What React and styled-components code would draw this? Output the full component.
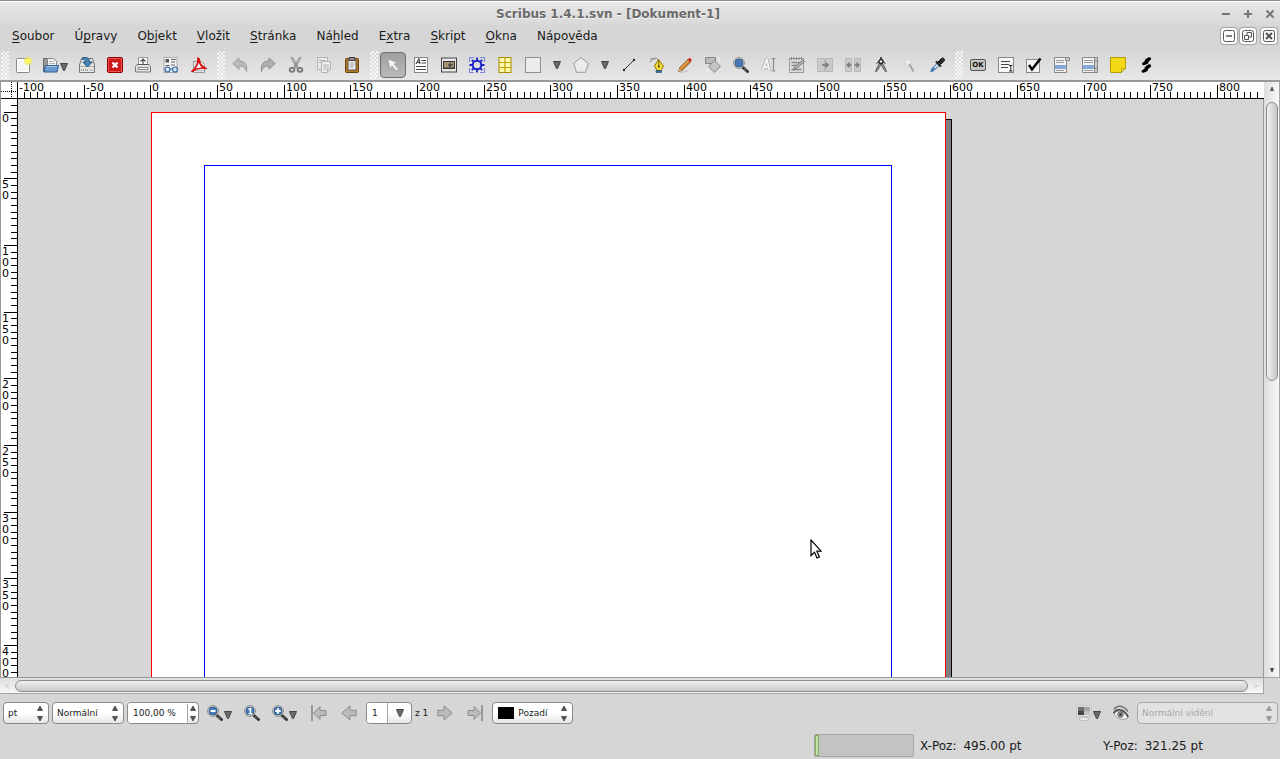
import React from "react";
import styled, { createGlobalStyle, css } from "styled-components";

const SCALE = 4 / 3;

const menus = [
  ["", "S", "oubor"],
  ["Ú", "p", "ravy"],
  ["O", "b", "jekt"],
  ["", "V", "ložit"],
  ["", "S", "tránka"],
  ["Ná", "h", "led"],
  ["E", "x", "tra"],
  ["", "S", "kript"],
  ["", "O", "kna"],
  ["Nápo", "v", "ěda"],
];

const magnifier = (
  <>
    <path d="M10 10.500l4.500 4" stroke="#333" strokeWidth="3" strokeLinecap="round" />
    <path d="M11 11.500l3 2.600" stroke="#aaa" strokeWidth="1" strokeDasharray="1 1" />
    <circle cx="6" cy="6" r="5.400" fill="#e4e4e0" stroke="#8a8c86" />
    <circle cx="6" cy="6" r="4" fill="#4a7ab5" stroke="#2f5c94" />
  </>
);

const icons = {
  new: (
    <>
      <rect x="0.500" y="1.500" width="13" height="14" rx="1" fill="#f4f4f2" stroke="#888" />
      <rect x="1.500" y="2.500" width="11" height="12" fill="none" stroke="#fff" />
      <circle cx="12" cy="4" r="4" fill="#f5ef55" opacity="0.7" />
      <circle cx="12" cy="4" r="2.300" fill="#fffa5c" />
    </>
  ),
  open: (
    <>
      <path d="M0.500 14.500v-13h5l1 2h6v11z" fill="#999b96" stroke="#666" />
      <path d="M4.500 10V1.500h6l3 2.500v6z" fill="#f1f1f0" stroke="#888" />
      <path d="M6 4.500h5M6 6.500h6" stroke="#b5b5b5" />
      <path d="M2.500 8.500h13l-1.500 6.500H0.800z" fill="#6a9bd0" stroke="#2c5a92" />
      <path d="M3.300 9.500h11" stroke="#a7c6e8" />
    </>
  ),
  save: (
    <>
      <path d="M0.500 15.500V8l2-6.500h11l2 6.500v7.500z" fill="#e6e6e4" stroke="#777" />
      <path d="M1 9.500h14" stroke="#aaa" />
      <path d="M2.500 12v2M4.500 12v2M6.500 12v2M8.500 12v2" stroke="#999" />
      <path d="M11 13h3" stroke="#aaa" />
      <path d="M3 1c5-1.500 7.500 0 7.500 4h2.800L8.500 10 3.800 5h2.800c0-2-1.500-3-3.600-2.700z" fill="#4686b4" stroke="#1d527b" />
    </>
  ),
  close: (
    <>
      <rect x="0.500" y="0.500" width="15" height="15" rx="1.500" fill="#cc1919" stroke="#8e0000" />
      <rect x="1.500" y="1.500" width="13" height="13" rx="0.500" fill="none" stroke="#e55" />
      <path d="M5.500 5.500l5 5M10.500 5.500l-5 5" stroke="#fff" strokeWidth="2.300" />
    </>
  ),
  print: (
    <>
      <rect x="3.500" y="0.500" width="9" height="9" fill="#fafafa" stroke="#999" />
      <path d="M8 2v5M5.500 4.500L8 2l2.500 2.500" stroke="#555" fill="none" strokeWidth="1.200" />
      <path d="M0.500 9.500l1.500-2h12l1.500 2v5.500h-15z" fill="#e3e3e1" stroke="#777" />
      <path d="M3 10.500h10v2H3z" fill="#fff" stroke="#888" />
      <path d="M3 7.500h10" stroke="#555" />
    </>
  ),
  preflight: (
    <>
      <rect x="1" y="0.500" width="13" height="15" fill="#f2f2f0" stroke="#aaa" />
      <path d="M2.500 2h3.500v3.500H2.500z" fill="#555" />
      <path d="M8 2.500h5M8 5h4M2.500 8.500h4M8 8h4" stroke="#666" />
      <circle cx="4.500" cy="12.500" r="2.500" fill="#d7e6f5" stroke="#3465a4" strokeWidth="1.200" />
      <circle cx="12" cy="12.500" r="2.500" fill="#d7e6f5" stroke="#3465a4" strokeWidth="1.200" />
      <path d="M6.500 12h3" stroke="#3465a4" />
    </>
  ),
  pdf: (
    <>
      <path d="M2.500 4.500h8l3 3v8h-11z" fill="#e2e2e2" stroke="#999" />
      <path d="M4 13.500h8" stroke="#bbb" />
      <path d="M1 14.500C5 11 7.500 6 7 1c1 5 3 9 8 10.500-5-1.300-9-.5-14 3z" fill="#fff" stroke="#d40f0f" strokeWidth="1.700" strokeLinejoin="round" />
      <path d="M7.500 1.500l1 4" stroke="#d40f0f" strokeWidth="2.500" />
    </>
  ),
  undo: <path d="M0.800 6.500L7 1v3c5 0 8.500 2.500 7.500 10.500-1-4-3-5.500-7.500-5.500v3.200z" fill="#bcbcbc" stroke="#999" />,
  redo: <path d="M15.200 6.500L9 1v3C4 4 0.500 6.500 1.500 14.500c1-4 3-5.500 7.500-5.500v3.200z" fill="#b0b0b0" stroke="#8c8c8c" />,
  cut: (
    <>
      <path d="M3 0.500h1.500l6 10-1.500 1zM13 0.500h-1.500l-6 10 1.500 1z" fill="#ccc" stroke="#8c8c8c" />
      <ellipse cx="4" cy="12.800" rx="2.400" ry="2" fill="none" stroke="#777" strokeWidth="1.800" />
      <ellipse cx="12" cy="12.800" rx="2.400" ry="2" fill="none" stroke="#777" strokeWidth="1.800" />
    </>
  ),
  copy: (
    <g stroke="#b4b4b4" fill="#e9e9e9">
      <path d="M1.500 0.500h10v12h-10z" />
      <path d="M3 3.500h6M3 5.500h6" />
      <path d="M5.500 4.500h9v8l-3 3h-6z" fill="#eee" />
      <path d="M7 8h6M7 10h6M7 12h4M11.500 15v-3h3" />
    </g>
  ),
  paste: (
    <>
      <rect x="1.500" y="1.500" width="13" height="14" rx="1" fill="#b5742a" stroke="#6e4108" />
      <path d="M4 3.500h8v9.500H4z" fill="#f3f3f1" stroke="#555" />
      <path d="M5 0.500h6v3H5z" fill="#888" stroke="#444" />
      <path d="M5.500 6h5M5.500 8h5M5.500 10h4" stroke="#999" />
    </>
  ),
  select: <path d="M3 2l9 3.500-3 1.700 4.500 4.800-2.300 2L7 9l-2 3z" fill="#f4f4f4" stroke="#999" strokeWidth="0.600" />,
  text: (
    <>
      <rect x="1.500" y="0.500" width="13" height="15" fill="#fdfdfd" stroke="#888" />
      <path d="M3 7l3-5 1 5M4 5.500h3" stroke="#444" fill="none" strokeWidth="1.200" />
      <path d="M8.500 3.500H13M8.500 6H13M3 9.500h10M3 12.500h10" stroke="#444" />
    </>
  ),
  image: (
    <>
      <rect x="0.500" y="1" width="15" height="14" fill="#e7e7e5" stroke="#444" />
      <rect x="2.500" y="4.500" width="11" height="7" fill="#a59474" stroke="#333" />
      <path d="M3 10.500h10v1H3z" fill="#4c4330" />
      <path d="M9 5.500V11M7 8h5" stroke="#333" />
    </>
  ),
  render: (
    <>
      <path d="M0.500 5V0.500H5M11 0.500h4.500V5M15.500 11v4.500H11M5 15.500H0.500V11" fill="none" stroke="#7c88e0" strokeWidth="1.200" />
      <g stroke="#1c22c8" fill="none">
        <circle cx="8" cy="8" r="4.300" strokeWidth="2" />
        <path d="M8 0.500v3M8 12.500v3M0.500 8h3M12.500 8h3M2.800 2.800l2 2M11.200 11.200l2 2M13.200 2.800l-2 2M4.800 11.200l-2 2" strokeWidth="1.800" />
      </g>
    </>
  ),
  table: (
    <>
      <rect x="2" y="0.500" width="12" height="15" fill="#fff8b0" stroke="#a88c00" />
      <path d="M8 1v14M2 5.500h12M2 10.500h12" stroke="#c2a200" strokeWidth="1.200" />
    </>
  ),
  shape: <rect x="0.500" y="0.500" width="15" height="15" fill="#ececec" stroke="#8e8e8e" />,
  polygon: <path d="M8 0.700l7.300 5.600-2.800 9h-9L0.700 6.300z" fill="#ececec" stroke="#999" />,
  line: (
    <>
      <path d="M3 13L13 3" stroke="#333" />
      <circle cx="3" cy="13" r="1.200" fill="#222" />
      <circle cx="13" cy="3" r="1.200" fill="#222" />
    </>
  ),
  bezier: (
    <>
      <path d="M1 5C4-0.500 9 0.500 10 4M1 2h5" fill="none" stroke="#888" />
      <path d="M9.500 2.500L5.500 9l2.500 4.500h4L14.500 9z" fill="#f1da3c" stroke="#8f7600" />
      <path d="M9.800 3v6" stroke="#6f5a00" />
      <circle cx="9.800" cy="9.500" r="1" fill="#4c3e00" />
      <path d="M7 13.500h5.500v2H7z" fill="#3b6ea5" stroke="#234a75" strokeWidth="0.600" />
    </>
  ),
  pencil: (
    <>
      <path d="M3 14.700c4 1 6 0 8-1" stroke="#c4c4c4" strokeWidth="1.500" fill="none" />
      <path d="M1.500 14.500l1.500-4L11 2.500l2.500 2.500-8 8z" fill="#d98a32" stroke="#834a0c" />
      <path d="M11 2.500l1-1c1-.8 3 1 2.200 2.200l-.9 1.100z" fill="#db2525" stroke="#b33" strokeWidth="0.500" />
      <path d="M1.500 14.500l1-2.700 1.800 1.500z" fill="#f0d8a8" />
      <path d="M4 11l7-7" stroke="#f3b873" />
    </>
  ),
  rotate: (
    <>
      <path d="M0.500 0.500h10v6h-10z" fill="#bbb" stroke="#888" />
      <path d="M9.500 3.500l6 6-6 6-6-6z" fill="#c4c4c4" stroke="#888" />
      <path d="M12 1c2 0 3 1.500 3 3M1.500 11c0 2.500 1 4 3.500 4" fill="none" stroke="#eee" strokeWidth="1.500" />
    </>
  ),
  zoom: magnifier,
  textEdit: (
    <>
      <path d="M1.500 13.500L5.800 2.500l2.700 11M3 10h5" fill="none" stroke="#aaa" strokeWidth="3.400" />
      <path d="M1.500 13.500L5.800 2.500l2.700 11M3 10h5" fill="none" stroke="#f4f4f4" strokeWidth="2" />
      <path d="M10.500 1.500h4M12.500 1.500v12.500M10.500 14h4" stroke="#8e8e8e" strokeWidth="1.200" />
    </>
  ),
  story: (
    <>
      <rect x="0.500" y="1.500" width="14" height="14" fill="#ddd" stroke="#999" />
      <path d="M2.500 0v3M5 0v3M7.500 0v3M10 0v3M12.500 0v3" stroke="#888" />
      <path d="M2.500 5.500h8M2.500 8.500h6M2.500 12.500h10" stroke="#888" strokeWidth="1.400" />
      <path d="M4 13l2-3.500L14 3l1.500 1.500-8 7z" fill="#b5b5b5" stroke="#777" />
    </>
  ),
  link: (
    <>
      <path d="M0.500 1.500h7v13h-7zM8.500 1.500h7v13h-7z" fill="#cacaca" stroke="#b8b8b8" />
      <path d="M5 8h5M8.500 5.500L11 8l-2.500 2.500" fill="none" stroke="#777" strokeWidth="1.500" />
    </>
  ),
  unlink: (
    <>
      <path d="M0.500 1.500h6v13h-6zM9.500 1.500h6v13h-6z" fill="#cacaca" stroke="#b8b8b8" />
      <path d="M2.500 8h4M9.500 8h4M4.500 5.800L2.300 8l2.200 2.200M11.500 5.800L13.700 8l-2.200 2.200" fill="none" stroke="#777" strokeWidth="1.500" />
    </>
  ),
  measure: (
    <>
      <path d="M8 0v3" stroke="#222" strokeWidth="1.500" />
      <path d="M7 5l-3.500 7-.8 3 2-2L9 5.500zM9 5l3.500 7 .8 3-2-2L7 5.500z" fill="#aaa" stroke="#555" />
      <circle cx="8" cy="4.500" r="2" fill="#eee" stroke="#222" strokeWidth="1.300" />
      <path d="M3.500 6.500L6 4.500M12.500 6.500L10 4.500" stroke="#222" />
    </>
  ),
  copyProps: (
    <>
      <path d="M8 6.500l4.500 8" stroke="#a5a5a5" strokeWidth="2" />
      <path d="M6.500 1l.8 2.800L10.500 2 8.800 5l2 2-3-.2L6.500 10l-1-3.500L2 6l3-1.500z" fill="#f2f2f2" stroke="#ccc" strokeWidth="0.600" />
    </>
  ),
  picker: (
    <>
      <path d="M2 14.500l1-3L8.500 6 10.500 8 5 13.500z" fill="#dbe7f5" stroke="#3465a4" />
      <path d="M1.200 15l3-1.500 2.500-2.500-2.500-.5-1.500 2z" fill="#3c78c0" />
      <path d="M7 4.500l5 5M9 6l3.500-3.500" stroke="#222" strokeWidth="2.200" />
      <path d="M10 5.500l2.500-4c1.300-1.600 4.300 1 2.500 2.700L12 7z" fill="#2b2f36" stroke="#111" />
    </>
  ),
  pdfText: (
    <>
      <rect x="0.500" y="0.500" width="15" height="15" fill="#f7f7f5" stroke="#888" />
      <path d="M3 4.500h9M3 7.500h8M3 10.500h7" stroke="#444" />
      <path d="M11 8.500h3.500M12.800 8.500v5.500M11 14h3.500" stroke="#222" />
    </>
  ),
  check: (
    <>
      <rect x="0.500" y="2.500" width="13" height="13" fill="#f2f2f0" stroke="#888" />
      <path d="M3 8l3 4.500L14.500 1.500" fill="none" stroke="#000" strokeWidth="2.400" />
    </>
  ),
  combo: (
    <>
      <path d="M0.500 0.500h12v15h-12z" fill="#f3f3f1" stroke="#888" />
      <path d="M11.500 0.500h4v3h-4z" fill="#ccc" stroke="#888" />
      <path d="M2 3.500h8M2 5.500h8M2 13.500h8" stroke="#999" />
      <path d="M1 8h11v4H1z" fill="#86a8d6" />
    </>
  ),
  list: (
    <>
      <path d="M0.500 0.500h15v15h-15z" fill="#f3f3f1" stroke="#888" />
      <path d="M12.500 0.500h3v15h-3zM12.500 4h3M12.500 11.500h3" fill="#ccc" stroke="#888" />
      <path d="M2 3.500h9M2 5.500h9M2 13.500h9" stroke="#999" />
      <path d="M1 8h11v4H1z" fill="#86a8d6" />
    </>
  ),
  note: (
    <>
      <path d="M0.500 0.500h15v11l-4 4h-11z" fill="#f3da18" stroke="#b89c00" />
      <path d="M11.500 15.500v-4h4z" fill="#fff07a" stroke="#b89c00" />
    </>
  ),
  annotation: (
    <g fill="#000">
      <ellipse cx="9.800" cy="2.800" rx="3.600" ry="1.900" transform="rotate(-32 9.800 2.800)" />
      <ellipse cx="7.300" cy="6" rx="3.400" ry="1.700" transform="rotate(-22 7.300 6)" />
      <ellipse cx="9.800" cy="10" rx="3.600" ry="1.900" transform="rotate(-32 9.800 10)" />
      <ellipse cx="6.800" cy="13.500" rx="3.400" ry="1.700" transform="rotate(-22 6.800 13.500)" />
    </g>
  ),
  zoomOut: (
    <>
      {magnifier}
      <path d="M3.500 6h5" stroke="#fff" strokeWidth="2" />
    </>
  ),
  zoomOne: (
    <>
      {magnifier}
      <path d="M4.500 4.500L6.500 3.500v5M4.500 8.700h4" fill="none" stroke="#fff" strokeWidth="1.500" />
    </>
  ),
  zoomIn: (
    <>
      {magnifier}
      <path d="M3.300 6h5.400M6 3.300v5.400" stroke="#fff" strokeWidth="2" />
    </>
  ),
  first: (
    <>
      <path d="M1 0v16" stroke="#888" strokeWidth="1.600" />
      <path d="M2.500 8L9 1.500v4h6v5H9v4z" fill="#bbb" stroke="#8c8c8c" />
    </>
  ),
  prev: <path d="M0.800 8L9 0.800v4.500h6.200v5.400H9v4.500z" fill="#bbb" stroke="#8c8c8c" />,
  next: <path d="M15.200 8L7 0.800v4.500H0.800v5.400H7v4.500z" fill="#bbb" stroke="#8c8c8c" />,
  last: (
    <>
      <path d="M15 0v16" stroke="#888" strokeWidth="1.600" />
      <path d="M13.500 8L7 1.500v4H1v5h6v4z" fill="#bbb" stroke="#8c8c8c" />
    </>
  ),
  preview: (
    <>
      <rect x="0.500" y="0.500" width="15" height="11" fill="#ddd" stroke="#c8c8c8" />
      <path d="M2 2h6v4H2z" fill="#6d6d6d" />
      <path d="M8 2h6v4H8z" fill="#a5a5a5" />
      <path d="M2 6h6v4H2z" fill="#444" />
      <path d="M8 6h6v4H8z" fill="#c4c4c4" />
      <ellipse cx="8" cy="14" rx="5" ry="1.500" fill="#f3f3f3" stroke="#bbb" />
    </>
  ),
  eye: (
    <>
      <path d="M1 4.500C4-0.500 10 0 15 6.500" fill="none" stroke="#777" strokeWidth="1.500" />
      <path d="M1 9C4 5 11 4 15 13 10 15.500 4 14 1 9z" fill="#f4f4f4" stroke="#888" strokeWidth="0.800" />
      <path d="M0.500 8C4 3 11 3.500 15.300 12" fill="none" stroke="#444" strokeWidth="1.500" />
      <circle cx="7.500" cy="9.500" r="2.700" fill="#aaa" stroke="#555" />
      <circle cx="7.500" cy="9.500" r="1.200" fill="#222" />
    </>
  ),
};

const Icon = ({ name }) => (
  <Glyph viewBox="0 0 16 16" fill="none" aria-hidden="true">
    {icons[name]}
  </Glyph>
);

const DownArrow = ({ low }) => (
  <ArrowGlyph viewBox="0 0 8 8" aria-hidden="true" $low={low}>
    <path d="M0.500 0.500h7L4.500 7.500h-1z" fill="#6a6a6a" stroke="#444" />
  </ArrowGlyph>
);

const Steppers = () => (
  <StepGlyph viewBox="0 0 6 18" aria-hidden="true">
    <path d="M3 2l2.500 4.500h-5zM3 17l2.500-4.500h-5z" fill="#555" stroke="#444" strokeWidth="0.800" />
  </StepGlyph>
);

const Tool = ({ name, label, menu, wide, active }) => (
  <ToolButton type="button" aria-label={label} $menu={menu} $wide={wide} $active={active}>
    <Icon name={name} />
    {(menu || wide) && <DownArrow low={menu} />}
  </ToolButton>
);

const Choice = ({ label, value, width, swatch, disabled }) => (
  <Field $width={width} $disabled={disabled}>
    {swatch && <Swatch />}
    <Select aria-label={label} defaultValue={value} disabled={disabled}>
      <option>{value}</option>
    </Select>
    <Steppers />
  </Field>
);

// tick positions for every 5 pt between the two pixel bounds
const ticks = (origin, from, to) => {
  const list = [];
  const start = Math.floor((from - origin) / SCALE / 5) * 5;
  for (let v = start; ; v += 5) {
    const pos = Math.floor(origin + v * SCALE);
    if (pos >= to) break;
    list.push({ v, pos, major: v % 50 === 0 });
  }
  return list;
};

const HorizontalRuler = () => (
  <HRuler aria-label="Vodorovné pravítko">
    {ticks(132.67, -1, window.innerWidth - 34).map(({ v, pos, major }) => (
      <g key={v}>
        <rect x={pos} y={major ? 3 : 10} width="1" height={major ? 13 : 6} />
        {major && <text x={pos + 2} y="9">{v}</text>}
      </g>
    ))}
  </HRuler>
);

const VerticalRuler = () => (
  <VRuler aria-label="Svislé pravítko">
    {ticks(13, -8, window.innerHeight - 181).map(({ v, pos, major }) => (
      <g key={v}>
        <rect x={major ? 3 : 10} y={pos} width={major ? 13 : 6} height="1" />
        {major &&
          String(v).split("").map((digit, i) => (
            <text key={i} x="1" y={pos + 10 + i * 11}>{digit}</text>
          ))}
      </g>
    ))}
  </VRuler>
);

const App = () => {
  return (
    <>
      <GlobalStyle />
      <Window>
        <TitleBar>
          <Title>Scribus 1.4.1.svn - [Dokument-1]</Title>
          <WindowButtons>
            <WindowButton type="button" aria-label="Minimalizovat">
              <svg width="10" height="10"><path d="M1 5h8" stroke="#777" strokeWidth="2" /></svg>
            </WindowButton>
            <WindowButton type="button" aria-label="Maximalizovat">
              <svg width="10" height="10"><path d="M1 5h8M5 1v8" stroke="#777" strokeWidth="2" /></svg>
            </WindowButton>
            <WindowButton type="button" aria-label="Zavřít">
              <svg width="10" height="10"><path d="M1.500 1.500l7 7M8.500 1.500l-7 7" stroke="#777" strokeWidth="2" /></svg>
            </WindowButton>
          </WindowButtons>
        </TitleBar>

        <MenuBar>
          {menus.map(([before, key, after]) => (
            <MenuItem type="button" key={before + key + after}>
              {before}<u>{key}</u>{after}
            </MenuItem>
          ))}
          <DocumentButtons>
            <DocumentButton type="button" aria-label="Minimalizovat dokument">
              <svg width="12" height="12" fill="none" stroke="#555">
                <rect x="0.500" y="0.500" width="11" height="11" rx="2" />
                <path d="M3 6h6" strokeWidth="1.500" />
              </svg>
            </DocumentButton>
            <DocumentButton type="button" aria-label="Obnovit dokument">
              <svg width="12" height="12" fill="none" stroke="#555">
                <rect x="0.500" y="0.500" width="11" height="11" rx="2" />
                <path d="M2.500 5.500h4v4h-4zM5 5V2.500h4.500V7H7" />
              </svg>
            </DocumentButton>
            <DocumentButton type="button" aria-label="Zavřít dokument" $apart>
              <svg width="12" height="12" fill="none" stroke="#555">
                <rect x="0.500" y="0.500" width="11" height="11" rx="2" />
                <path d="M3 3l6 6M9 3l-6 6" strokeWidth="2" />
              </svg>
            </DocumentButton>
          </DocumentButtons>
        </MenuBar>

        <ToolBar>
          <ToolGroup>
            <Handle />
            <Tool name="new" label="Nový" />
            <Tool name="open" label="Otevřít" menu />
            <Tool name="save" label="Uložit" />
            <Tool name="close" label="Zavřít" />
            <Tool name="print" label="Tisk" />
            <Tool name="preflight" label="Předtisková kontrola" />
            <Tool name="pdf" label="Uložit jako PDF" />
          </ToolGroup>
          <ToolGroup>
            <Handle />
            <Tool name="undo" label="Zpět" />
            <Tool name="redo" label="Vpřed" />
            <Tool name="cut" label="Vyjmout" />
            <Tool name="copy" label="Kopírovat" />
            <Tool name="paste" label="Vložit" />
          </ToolGroup>
          <ToolGroup>
            <Handle />
            <Tool name="select" label="Vybrat objekt" active />
            <Tool name="text" label="Textový rámec" />
            <Tool name="image" label="Obrázkový rámec" />
            <Tool name="render" label="Vykreslovací rámec" />
            <Tool name="table" label="Tabulka" />
            <Tool name="shape" label="Tvar" wide />
            <Tool name="polygon" label="Mnohoúhelník" wide />
            <Tool name="line" label="Čára" />
            <Tool name="bezier" label="Beziérova křivka" />
            <Tool name="pencil" label="Kreslit od ruky" />
            <Tool name="rotate" label="Otočit objekt" />
            <Tool name="zoom" label="Lupa" />
            <Tool name="textEdit" label="Upravit obsah" />
            <Tool name="story" label="Editor textů" />
            <Tool name="link" label="Propojit rámce" />
            <Tool name="unlink" label="Zrušit propojení" />
            <Tool name="measure" label="Měření" />
            <Tool name="copyProps" label="Kopírovat vlastnosti" />
            <Tool name="picker" label="Pipeta" />
          </ToolGroup>
          <ToolGroup>
            <Handle />
            <ToolButton type="button">
              <OkMark>OK</OkMark>
            </ToolButton>
            <Tool name="pdfText" label="Textové pole PDF" />
            <Tool name="check" label="Zaškrtávací pole PDF" />
            <Tool name="combo" label="Rozbalovací pole PDF" />
            <Tool name="list" label="Seznam PDF" />
            <Tool name="note" label="Poznámka PDF" />
            <Tool name="annotation" label="Odkaz PDF" />
          </ToolGroup>
        </ToolBar>

        <Workspace>
          <View>
            <Corner>
              <svg width="16" height="16" stroke="#000" strokeDasharray="1 1">
                <path d="M10.500 0v16M0 9.500h16" />
              </svg>
            </Corner>
            <HorizontalRuler />
            <VerticalRuler />
            <Canvas>
              <Page>
                <Margins />
              </Page>
              <Pointer viewBox="0 0 12 20" aria-hidden="true">
                <path d="M1 1v15.500l3.500-3.300 2.500 5.800 2.400-1.100-2.500-5.700h4.300z" fill="#fff" stroke="#000" strokeWidth="1.200" />
              </Pointer>
            </Canvas>
          </View>
          <VTrack>
            <ScrollGlyph viewBox="0 0 6 6"><path d="M1 5h4L3.500 1h-1z" fill="#555" /></ScrollGlyph>
            <VThumb />
            <ScrollGlyph viewBox="0 0 6 6"><path d="M1 1h4L3.500 5h-1z" fill="#444" /></ScrollGlyph>
          </VTrack>
          <HTrack>
            <ScrollGlyph viewBox="0 0 6 6"><path d="M5 1L1.500 3 5 5" fill="none" stroke="#ccc" /></ScrollGlyph>
            <HThumb />
            <ScrollGlyph viewBox="0 0 6 6"><path d="M1 1l3.500 2L1 5" fill="none" stroke="#ccc" /></ScrollGlyph>
          </HTrack>
        </Workspace>

        <ViewBar>
          <Choice label="Jednotky" value="pt" width={46} />
          <Choice label="Kvalita náhledu" value="Normální" width={72} />
          <Field $width={72} $flush>
            <Input aria-label="Zvětšení" defaultValue="100,00 %" />
            <SpinEnd>
              <Steppers />
            </SpinEnd>
          </Field>
          <ViewTools>
            <ViewButton type="button" aria-label="Zmenšit"><Icon name="zoomOut" /><DownArrow low /></ViewButton>
            <ViewButton type="button" aria-label="Velikost 1:1"><Icon name="zoomOne" /></ViewButton>
            <ViewButton type="button" aria-label="Zvětšit"><Icon name="zoomIn" /><DownArrow low /></ViewButton>
          </ViewTools>
          <Pager>
            <ViewButton type="button" aria-label="První strana"><Icon name="first" /></ViewButton>
            <ViewButton type="button" aria-label="Předchozí strana"><Icon name="prev" /></ViewButton>
          </Pager>
          <Field $width={46} $flush>
            <Input aria-label="Strana" defaultValue="1" />
            <ComboEnd type="button" aria-label="Vybrat stranu"><DownArrow /></ComboEnd>
          </Field>
          <Small>z 1</Small>
          <Pager>
            <ViewButton type="button" aria-label="Další strana"><Icon name="next" /></ViewButton>
            <ViewButton type="button" aria-label="Poslední strana"><Icon name="last" /></ViewButton>
          </Pager>
          <Choice label="Vrstva" value="Pozadí" width={81} swatch />
          <VisionTools>
            <ViewButton type="button" aria-label="Režim náhledu"><Icon name="preview" /><DownArrow low /></ViewButton>
            <ViewButton type="button" aria-label="Náhled"><Icon name="eye" /></ViewButton>
          </VisionTools>
          <Choice label="Vidění" value="Normální vidění" width={141} disabled />
        </ViewBar>

        <StatusBar>
          <Progress><ProgressFill /></Progress>
          <Position><span>X-Poz:</span><span>495.00 pt</span></Position>
          <Position><span>Y-Poz:</span><span>321.25 pt</span></Position>
        </StatusBar>
      </Window>
    </>
  );
};

const GlobalStyle = createGlobalStyle`
  * {
    box-sizing: border-box;
  }
  body {
    margin: 0;
    overflow: hidden;
    background: #d6d6d6;
  }
  button, input, select {
    font: inherit;
    color: inherit;
    margin: 0;
    padding: 0;
    border: 0;
    background: none;
    outline: 0;
  }
`;

const Window = styled.div`
  height: 100vh;
  display: flex;
  flex-direction: column;
  overflow: hidden;
  background: #d6d6d6;
  color: #1a1a1a;
  font: 12px "DejaVu Sans", sans-serif;
`;

const TitleBar = styled.header`
  display: flex;
  align-items: center;
  height: 25px;
  flex: none;
  padding-top: 1px;
  border-top: 1px solid #8e8e8e;
  box-shadow: inset 0 1px #fff;
  background: linear-gradient(#e8e8e8, #d8d8d8);
`;

const Title = styled.h1`
  flex: 1;
  margin: 0;
  text-align: center;
  font-size: 12px;
  font-weight: bold;
  color: #6a6a6a;
  text-shadow: 0 1px #f4f4f4;
`;

const WindowButtons = styled.div`
  display: flex;
  gap: 12px;
  padding: 0 5px;
`;

const WindowButton = styled.button`
  display: flex;
`;

const MenuBar = styled.nav`
  display: flex;
  align-items: center;
  height: 25px;
  flex: none;
  padding: 0 3px 3px 2px;
`;

const MenuItem = styled.button`
  padding: 0 10px;
  line-height: 20px;
  u {
    text-underline-offset: 2px;
    text-decoration-thickness: 1px;
    text-decoration-skip-ink: none;
  }
`;

const DocumentButtons = styled.div`
  display: flex;
  gap: 3px;
  margin-left: auto;
`;

const DocumentButton = styled.button`
  display: flex;
  align-items: center;
  justify-content: center;
  width: 16px;
  height: 16px;
  border-radius: 3px;
  background: #fbfbfb;
  box-shadow: 0 0 1px 1px #a5a5a5;
  margin-left: ${(props) => (props.$apart ? "2px" : "0")};
`;

const ToolBar = styled.div`
  display: flex;
  gap: 5px;
  height: 30px;
  flex: none;
  padding: 1px;
  background: linear-gradient(#d6d6d6, #e7e7e7);
`;

const ToolGroup = styled.div`
  display: flex;
  align-items: center;
  gap: 2px;
`;

const Handle = styled.div`
  width: 8px;
  height: 28px;
  background: repeating-conic-gradient(#f6f6f6 0 25%, transparent 0 50%) 0 0 / 4px 4px;
`;

const ToolButton = styled.button`
  display: flex;
  align-items: center;
  justify-content: center;
  width: 26px;
  height: 26px;
  ${(props) =>
    props.$menu &&
    css`
      width: 33px;
      gap: 1px;
    `}
  ${(props) =>
    props.$wide &&
    css`
      width: 46px;
      gap: 12px;
    `}
  ${(props) =>
    props.$active &&
    css`
      border: 1px solid #6e6e6e;
      border-radius: 4px;
      background: linear-gradient(#9f9f9f, #b9b9b9);
    `}
`;

const OkMark = styled.span`
  width: 16px;
  height: 12px;
  border: 1px solid #555;
  border-radius: 2px;
  background: #c5c7c0;
  font-size: 7px;
  font-weight: bold;
  line-height: 10px;
  color: #111;
`;

const Glyph = styled.svg`
  width: 16px;
  height: 16px;
  flex: none;
`;

const ArrowGlyph = styled.svg`
  width: 8px;
  height: 8px;
  flex: none;
  margin-top: ${(props) => (props.$low ? "4px" : "0")};
`;

const StepGlyph = styled.svg`
  width: 6px;
  height: 18px;
  flex: none;
`;

const Workspace = styled.main`
  flex: 1;
  min-height: 0;
  display: grid;
  grid-template: minmax(0, 1fr) 16px / minmax(0, 1fr) 16px;
  border-top: 2px solid #999;
`;

const View = styled.section`
  display: grid;
  grid-template: 17px minmax(0, 1fr) / 17px minmax(0, 1fr);
  min-height: 0;
  border-left: 1px solid #999;
  border-bottom: 1px solid #999;
`;

const Corner = styled.div`
  background: #fff;
  border-right: 1px solid #000;
  border-bottom: 1px solid #000;
`;

const rulerBase = css`
  display: block;
  background: #fff;
  overflow: hidden;
  font-size: 11px;
`;

const HRuler = styled.svg`
  ${rulerBase}
  width: 100%;
  height: 17px;
  border-bottom: 1px solid #000;
`;

const VRuler = styled.svg`
  ${rulerBase}
  width: 17px;
  height: 100%;
  border-right: 1px solid #000;
`;

const Canvas = styled.div`
  position: relative;
  overflow: hidden;
  padding: 13px 0 0 133px;
  border-right: 1px solid #999;
`;

const Page = styled.div`
  width: 795px;
  height: 1123px;
  padding: 52px 53px 52px 52px;
  border: 1px solid #f00;
  background: #fff;
  box-shadow: 5px 8px #808080, 6px 7px #000;
`;

const Margins = styled.div`
  height: 100%;
  border: 1px solid #00f;
`;

const Pointer = styled.svg`
  position: absolute;
  left: 792px;
  top: 440px;
  width: 12px;
  height: 20px;
`;

const VTrack = styled.div`
  display: flex;
  flex-direction: column;
  align-items: center;
  padding: 4px 0;
  border-right: 1px solid #a5a59d;
  border-bottom: 1px solid #a5a59d;
  background: linear-gradient(to right, #dedede, #f8f8f8);
`;

const VThumb = styled.div`
  width: 12px;
  height: 279px;
  margin: 10px 0 auto;
  border: 1px solid #8c8c8c;
  border-radius: 6px;
  background: linear-gradient(to right, #f0f0f0, #c6c6c6);
`;

const HTrack = styled.div`
  display: flex;
  align-items: center;
  gap: 5px;
  padding: 0 4px;
  border-right: 1px solid #a5a59d;
  border-bottom: 1px solid #a5a59d;
  background: linear-gradient(#dedede, #f8f8f8);
`;

const HThumb = styled.div`
  flex: 1;
  height: 12px;
  border: 1px solid #8c8c8c;
  border-radius: 6px;
  background: linear-gradient(#f0f0f0, #c6c6c6);
`;

const ScrollGlyph = styled.svg`
  width: 6px;
  height: 6px;
  flex: none;
`;

const ViewBar = styled.div`
  display: flex;
  align-items: center;
  gap: 3px;
  height: 38px;
  flex: none;
  padding: 0 2px 0 3px;
  font-size: 9px;
`;

const Field = styled.div`
  display: flex;
  align-items: center;
  flex: none;
  width: ${(props) => props.$width}px;
  height: 22px;
  padding-right: ${(props) => (props.$flush ? "0" : "5px")};
  overflow: hidden;
  border: 1px solid #8a8a8a;
  border-radius: 4px;
  background: linear-gradient(#fff 50%, #e6e6e6);
  ${(props) =>
    props.$disabled &&
    css`
      border-color: #aaa;
      background: #e2e2e2;
      color: #a8a8a8;
      svg {
        opacity: 0.5;
      }
    `}
`;

const Select = styled.select`
  appearance: none;
  flex: 1;
  min-width: 0;
  height: 20px;
  padding-left: 4px;
  opacity: 1;
`;

const Swatch = styled.span`
  width: 16px;
  height: 12px;
  margin-left: 5px;
  background: #000;
`;

const Input = styled.input`
  flex: 1;
  min-width: 0;
  height: 20px;
  padding-left: 5px;
  background: #fff;
`;

const SpinEnd = styled.span`
  display: flex;
  padding: 0 2px;
  border-left: 1px solid #a5a5a5;
`;

const ComboEnd = styled.button`
  display: flex;
  align-items: center;
  justify-content: center;
  width: 24px;
  height: 20px;
  border-left: 1px solid #a5a5a5;
`;

const ViewTools = styled.div`
  display: flex;
  gap: 12px;
  padding: 0 5px;
`;

const ViewButton = styled.button`
  display: flex;
  align-items: center;
  gap: 1px;
`;

const Pager = styled.div`
  display: flex;
  gap: 14px;
  padding: 0 6px;
`;

const Small = styled.span`
  white-space: nowrap;
`;

const VisionTools = styled.div`
  display: flex;
  gap: 12px;
  margin-left: auto;
  padding-right: 5px;
`;

const StatusBar = styled.footer`
  display: flex;
  align-items: center;
  justify-content: flex-end;
  gap: 6px;
  height: 27px;
  flex: none;
`;

const Progress = styled.div`
  width: 100px;
  height: 23px;
  border: 1px solid #a5a5a5;
  border-radius: 2px;
  background: #c3c3c3;
`;

const ProgressFill = styled.div`
  width: 4px;
  height: 21px;
  border: 1px solid #84ad62;
  background: #c5dfae;
`;

const Position = styled.div`
  display: flex;
  gap: 7px;
  width: 177px;
`;

export default App;
